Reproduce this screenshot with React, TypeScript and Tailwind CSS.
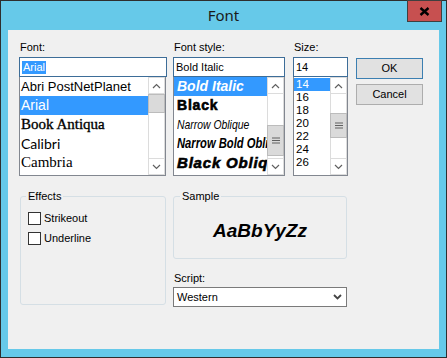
import React from "react";

const ui = "font-['Liberation_Sans',Arial,sans-serif] text-[11px] leading-[13px] text-black";

const ChevronUp = () => (
  <svg width="9" height="6" viewBox="0 0 9 6">
    <path d="M1 5 L4.5 1.5 L8 5" fill="none" stroke="#606060" strokeWidth="1.2" />
  </svg>
);

const ChevronDown = () => (
  <svg width="9" height="6" viewBox="0 0 9 6">
    <path d="M1 1 L4.5 4.5 L8 1" fill="none" stroke="#606060" strokeWidth="1.2" />
  </svg>
);

const Grip = () => (
  <svg width="8" height="7" viewBox="0 0 8 7">
    <path d="M0 1H8M0 3.5H8M0 6H8" stroke="#606060" strokeWidth="1" />
  </svg>
);

interface ScrollBarProps {
  thumbTop: string;
  thumbHeight: string;
  grip?: boolean;
}

const ScrollBar: React.FC<ScrollBarProps> = ({ thumbTop, thumbHeight, grip }) => (
  <div className="flex w-[17px] shrink-0 flex-col bg-white">
    <div className="flex h-[17px] items-center justify-center border border-[#dcdcdc]">
      <ChevronUp />
    </div>
    <div className="flex-1 border-x border-[#dcdcdc]">
      <div
        className={`${thumbTop} ${thumbHeight} -mx-px flex items-center justify-center border border-[#bcbcbc] bg-[#dadada]`}
      >
        {grip && <Grip />}
      </div>
    </div>
    <div className="flex h-[17px] items-center justify-center border border-[#dcdcdc]">
      <ChevronDown />
    </div>
  </div>
);

const EditBox: React.FC<{ children: React.ReactNode }> = ({ children }) => (
  <div className="flex h-[20px] items-center border border-[#3d6d98] bg-white pl-[2px]">
    {children}
  </div>
);

export default function App() {
  return (
    <div className={`${ui} flex h-[358px] w-[447px] flex-col border border-[#2e2e2e] bg-[#66c9e9]`}>
      {/* title bar */}
      <div className="relative flex h-[29px] shrink-0 items-center justify-center">
        <span className="font-['Noto_Sans',sans-serif] text-[15px] leading-none text-[#1a1a1a]">Font</span>
        <div className="absolute right-[4px] top-[-1px] flex h-[22px] w-[35px] items-center justify-center border border-[#3f3f3f] bg-[#c75050]">
          <svg width="11" height="9" viewBox="0 0 11 9">
            <path d="M1.5 1 L9.5 8 M9.5 1 L1.5 8" stroke="#000" strokeWidth="2.4" />
          </svg>
        </div>
      </div>

      {/* client area */}
      <div className="mx-[7px] h-[319px] shrink-0 bg-[#f0f0f0] pl-[11px] pt-[11px]">
        <div className="flex">
          {/* Font */}
          <div className="flex w-[148px] flex-col">
            <div className="h-[16px] pl-[1px]">Font:</div>
            <EditBox>
              <span className="bg-[#3399ff] px-px text-white">Arial</span>
            </EditBox>
            <div className="flex h-[99px] w-[147px] border border-t-0 border-[#828790] bg-white">
              <div className="flex flex-1 flex-col text-black">
                <div className="flex h-[19px] items-center pl-[1px] text-[13px]">Abri PostNetPlanet</div>
                <div className="flex h-[19px] items-center bg-[#3399ff] pl-[1px] text-[14px] text-white">Arial</div>
                <div className="flex h-[19px] items-center pl-[1px] font-['Liberation_Serif',serif] text-[15px] [-webkit-text-stroke:0.35px_#000]">
                  Book Antiqua
                </div>
                <div className="flex h-[19px] items-center pl-[1px] font-['Lato',sans-serif] text-[14px]">Calibri</div>
                <div className="flex h-[19px] items-center pl-[1px] font-['Liberation_Serif',serif] text-[15px]">Cambria</div>
              </div>
              <ScrollBar thumbTop="mt-0" thumbHeight="h-[19px]" />
            </div>
          </div>

          {/* Font style */}
          <div className="ml-[6px] flex w-[112px] flex-col">
            <div className="h-[16px] pl-[1px]">Font style:</div>
            <EditBox>Bold Italic</EditBox>
            <div className="flex h-[99px] border border-t-0 border-[#828790] bg-white">
              <div className="flex min-w-0 flex-1 flex-col overflow-hidden whitespace-nowrap">
                <div className="flex h-[19px] items-center bg-[#3399ff] pl-[3px] text-[14px] font-bold italic text-white">
                  Bold Italic
                </div>
                <div className="flex h-[19px] items-center pl-[3px] text-[14px] font-bold tracking-[0.8px] [-webkit-text-stroke:0.6px_#000]">
                  Black
                </div>
                <div className="flex h-[19px] items-center pl-[3px] text-[13px] italic">
                  <span className="inline-block origin-left scale-x-[0.8]">Narrow Oblique</span>
                </div>
                <div className="flex h-[19px] items-center pl-[3px] text-[14px] font-bold italic">
                  <span className="inline-block origin-left scale-x-[0.8]">Narrow Bold Oblique</span>
                </div>
                <div className="flex h-[19px] items-center pl-[3px] text-[15px] font-bold italic tracking-[0.8px] [-webkit-text-stroke:0.6px_#000]">
                  Black Oblique
                </div>
              </div>
              <ScrollBar thumbTop="mt-[31px]" thumbHeight="h-[31px]" grip />
            </div>
          </div>

          {/* Size */}
          <div className="ml-[8px] flex w-[55px] flex-col">
            <div className="h-[16px] pl-[1px]">Size:</div>
            <EditBox>14</EditBox>
            <div className="flex h-[99px] border border-t-0 border-[#828790] bg-white">
              <div className="flex flex-1 flex-col pt-px text-[11.5px] leading-[13px]">
                {["14", "16", "18", "20", "22", "24", "26"].map((s, i) => (
                  <div
                    key={s}
                    className={`h-[13px] pl-[2px] ${i === 0 ? "bg-[#3399ff] text-white" : ""}`}
                  >
                    {s}
                  </div>
                ))}
              </div>
              <ScrollBar thumbTop="mt-[19px]" thumbHeight="h-[25px]" grip />
            </div>
          </div>

          {/* Buttons */}
          <div className="ml-[8px] mt-[17px] flex flex-col gap-[5px]">
            <button className="flex h-[21px] w-[67px] items-center justify-center border border-[#3c7fb1] bg-[#e1e1e1]">
              OK
            </button>
            <button className="flex h-[21px] w-[67px] items-center justify-center border border-[#adadad] bg-[#e1e1e1]">
              Cancel
            </button>
          </div>
        </div>

        {/* lower section */}
        <div className="mt-[14px] flex">
          <fieldset className="ml-px h-[115px] w-[146px] rounded-[3px] border border-[#d5dfe5] pl-[5px]">
            <legend className="px-[2px] leading-[13px]">Effects</legend>
            <div className="ml-[2px] mt-[9px] flex flex-col gap-[7px]">
              {["Strikeout", "Underline"].map((l) => (
                <label key={l} className="flex h-[13px] items-center gap-[3px]">
                  <span className="h-[13px] w-[13px] border border-[#333333] bg-white" />
                  {l}
                </label>
              ))}
            </div>
          </fieldset>

          <div className="ml-[7px] flex w-[174px] flex-col">
            <fieldset className="h-[69px] rounded-[3px] border border-[#d5dfe5] pl-[6px]">
              <legend className="px-[2px] leading-[13px]">Sample</legend>
              <div className="flex h-[54px] items-center justify-center pr-[6px] text-[19px] font-bold italic leading-none">
                AaBbYyZz
              </div>
            </fieldset>
            <div className="mt-[13px] h-[15px] pl-px">Script:</div>
            <div className="flex h-[20px] items-center justify-between border border-[#7a7a7a] bg-white pl-[3px] pr-[4px]">
              <span>Western</span>
              <svg width="9" height="6" viewBox="0 0 9 6">
                <path d="M1 1 L4.5 4.5 L8 1" fill="none" stroke="#444" strokeWidth="1.8" />
              </svg>
            </div>
          </div>
        </div>
      </div>
    </div>
  );
}
